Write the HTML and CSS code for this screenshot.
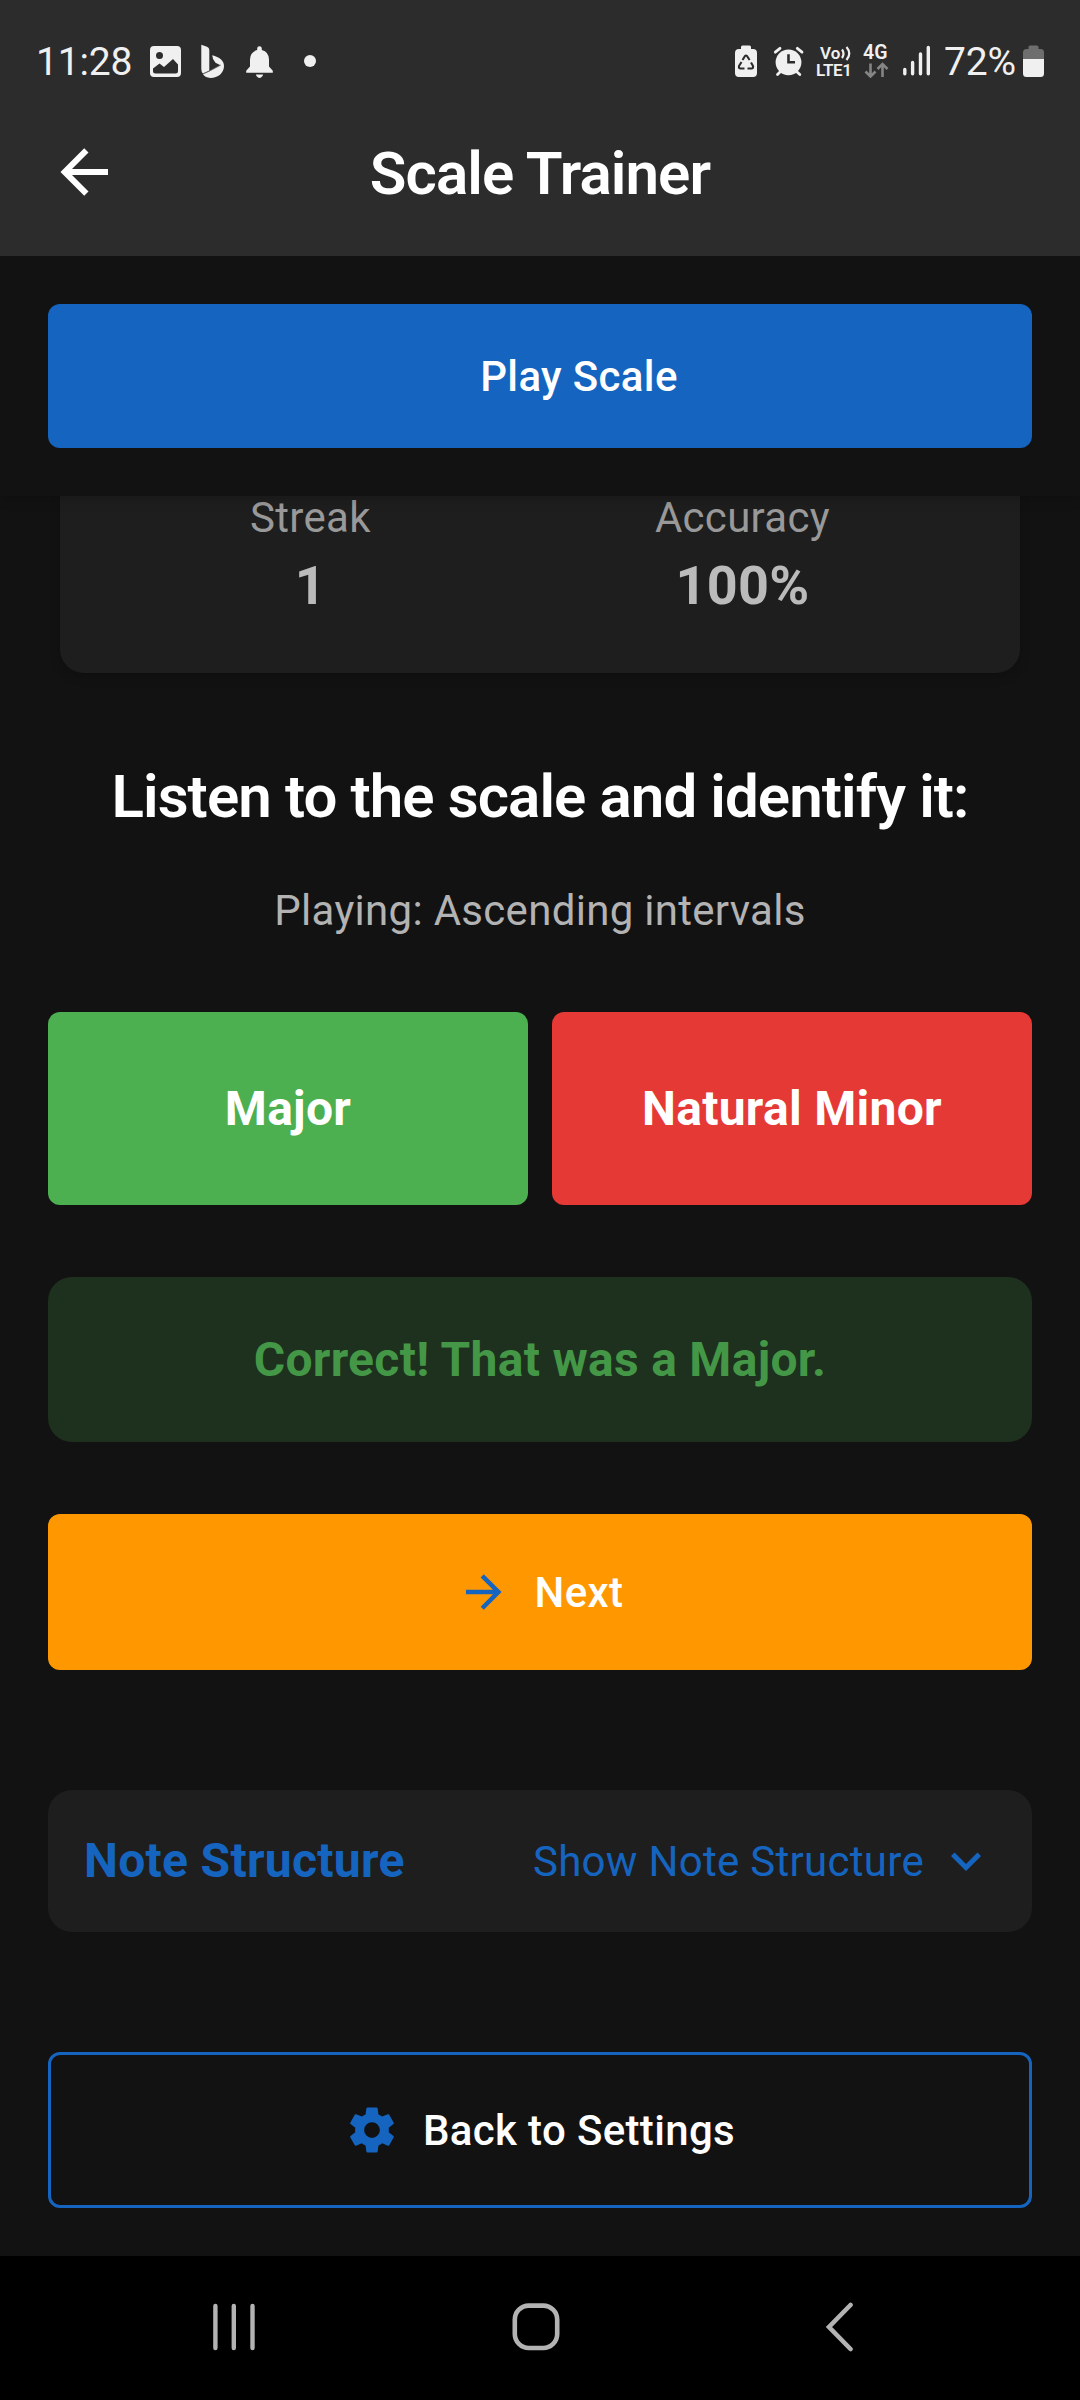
FILE: index.html
```html
<!DOCTYPE html>
<html lang="en">
<head>
<meta charset="utf-8">
<title>Scale Trainer</title>
<link rel="stylesheet" href="styles.css">
</head>
<body>
<div class="screen">
  <header class="top">
    <div class="status">
      <div class="status-side">
        <span class="clock">11:28</span>
        <svg class="i-photo" viewBox="150 44 32 34" width="32" height="34"><path fill="#f0f0f0" fill-rule="evenodd" d="M154 46h23a4 4 0 0 1 4 4v23a4 4 0 0 1-4 4h-23a4 4 0 0 1-4-4V50a4 4 0 0 1 4-4zM159.500 52.100a3.500 3.500 0 1 0 0 7a3.500 3.500 0 1 0 0-7zM153 68.500L159.500 63.500L164 67L173 59L178 64.500V71Q178 73.500 175.500 73.500H155.500Q153 73.500 153 71z"/></svg>
        <svg class="i-bing" viewBox="200 44 26 34" width="26" height="34"><path fill="#f0f0f0" d="M201.300 44.800L207 46.800Q209.300 47.800 209.300 50V70.500L203 73.500Q201.300 72 201.300 69zM212.200 55.200C219.500 57 224 60.500 224 66C224 73 218 78 210.500 78C206.500 78 204 76 203 74.300L209.600 71.300L220.500 65.300L215.500 62.700Q212.200 59 212.200 55.200z"/><path fill="none" stroke="#777" stroke-width=".7" d="M203 73.800L209.500 71L221 65"/></svg>
        <svg class="i-bell" viewBox="246 44 28 34" width="28" height="34"><path fill="#f0f0f0" d="M257.200 50V48.500a2.300 2.300 0 0 1 4.600 0V50Q269 52 269 59.500V66.500L272.800 70.800V72.800H246.200V70.800L250 66.500V59.500Q250 52 257.200 50zM255.800 74.500H263.200L262.500 76Q259.500 80 256.500 76z"/></svg>
        <span class="dot"></span>
      </div>
      <div class="status-side">
        <svg class="i-saver" viewBox="734 44 24 34" width="24" height="34"><path fill="#f0f0f0" d="M741 49v-2a1.500 1.500 0 0 1 1.500-1.500h7A1.500 1.500 0 0 1 751 47v2h2a4 4 0 0 1 4 4v20a4 4 0 0 1-4 4h-14a4 4 0 0 1-4-4V53a4 4 0 0 1 4-4z"/><g fill="none" stroke="#2c2c2c" stroke-width="2.100" stroke-linejoin="round"><path d="M742.500 60L745 56Q746 55 747 56L749.600 60"/><path d="M751 62.500L753 66Q753.500 68.500 751.500 68.500H747.500"/><path d="M744.500 68.500H740.500Q738.500 68.500 739 66L741.500 62"/></g></svg>
        <svg class="i-alarm" viewBox="773 44 31 34" width="31" height="34"><circle cx="788.500" cy="62.300" r="12.900" fill="#f0f0f0"/><path d="M775.300 52.200L780 48.300M797.300 48.300L802 52.200M777.500 74.500L781 71M796 71L799.800 74.500" fill="none" stroke="#f0f0f0" stroke-width="2.800" stroke-linecap="round"/><path d="M788.500 54.300V62.300H795" fill="none" stroke="#2c2c2c" stroke-width="2.600"/></svg>
        <div class="volte">
          <div class="volte-top">Vo<svg viewBox="841 46 12 15" width="12" height="15"><path d="M842 49.500Q845 53.800 842 58M846.500 47Q852 53.500 846.500 60" fill="none" stroke="#f0f0f0" stroke-width="2.200"/></svg></div>
          <div class="volte-bottom">LTE1</div>
        </div>
        <div class="data">
          <div class="data-type">4G</div>
          <svg viewBox="863 62 28 16" width="28" height="16"><path d="M870.500 63.500V76M865.500 71.500L870.500 76.500L875.500 71.500M882.500 77V64M877.500 69L882.500 64L887.500 69" fill="none" stroke="#858585" stroke-width="2.600"/></svg>
        </div>
        <svg class="i-signal" viewBox="902 44 29 34" width="29" height="34"><path d="M904.800 69.500V73.700M912.600 62.500V73.700M920.500 54V73.700M928.300 47.500V73.700" stroke="#f0f0f0" stroke-width="3.400" stroke-linecap="round"/></svg>
        <span class="percent">72%</span>
        <svg class="i-battery" viewBox="1023 44 21 34" width="21" height="34"><path fill="#6e6e6e" d="M1028.500 49v-2a1.500 1.500 0 0 1 1.500-1.500h7a1.500 1.500 0 0 1 1.500 1.500v2h2a3.500 3.500 0 0 1 3.500 3.500V59h-21v-6.500a3.500 3.500 0 0 1 3.500-3.500z"/><path fill="#f0f0f0" d="M1023 59h21v14.500a3.500 3.500 0 0 1-3.500 3.500h-14a3.500 3.500 0 0 1-3.500-3.500z"/></svg>
      </div>
    </div>
    <div class="appbar">
      <svg class="back" viewBox="0 0 24 24"><path fill="#fff" d="M20 11v2H8l5.500 5.500-1.420 1.420L4.160 12l7.920-7.920L13.500 5.500 8 11z"/></svg>
      <h1 class="title">Scale Trainer</h1>
    </div>
  </header>

  <div class="play-bar">
    <button class="btn play"><span class="icon"></span><span class="label">Play Scale</span></button>
  </div>

  <main class="content">
    <section class="stats">
      <div class="stat"><span class="stat-label">Streak</span><span class="stat-value">1</span></div>
      <div class="stat"><span class="stat-label">Accuracy</span><span class="stat-value">100%</span></div>
    </section>

    <h2 class="prompt">Listen to the scale and identify it:</h2>
    <p class="mode">Playing: Ascending intervals</p>

    <div class="answers">
      <button class="answer right">Major</button>
      <button class="answer wrong">Natural Minor</button>
    </div>

    <div class="feedback"><span>Correct! That was a Major.</span></div>

    <button class="btn next">
      <svg class="icon" viewBox="0 0 24 24"><path fill="#1565c0" d="M4 11v2h12l-5.500 5.500 1.420 1.420L19.840 12l-7.920-7.920L10.500 5.500 16 11z"/></svg>
      <span class="label">Next</span>
    </button>

    <section class="notes">
      <span class="notes-title">Note Structure</span>
      <span class="notes-toggle"><span class="label">Show Note Structure</span>
        <svg class="chevron" viewBox="0 0 24 24"><path fill="#1565c0" d="M7.410 8.580L12 13.170l4.590-4.590L18 10l-6 6-6-6z"/></svg>
      </span>
    </section>

    <button class="btn settings">
      <svg class="icon" viewBox="0 0 24 24"><path fill="#1565c0" d="M12 15.500A3.500 3.500 0 0 1 8.500 12 3.500 3.500 0 0 1 12 8.500a3.500 3.500 0 0 1 3.500 3.500 3.500 3.500 0 0 1-3.500 3.500m7.430-2.530c.04-.32.07-.64.07-.97 0-.33-.03-.66-.07-1l2.110-1.630c.19-.15.24-.42.12-.64l-2-3.460c-.12-.22-.39-.31-.61-.22l-2.490 1c-.52-.39-1.060-.73-1.690-.98l-.37-2.650A.506.506 0 0 0 14 2h-4c-.25 0-.46.18-.5.42l-.37 2.650c-.63.25-1.170.59-1.690.98l-2.490-1c-.22-.09-.49 0-.61.22l-2 3.460c-.13.22-.07.49.12.64L4.570 11c-.04.34-.07.67-.07 1 0 .33.03.65.07.97l-2.110 1.660c-.19.15-.25.42-.12.64l2 3.460c.12.22.39.3.61.22l2.490-1.010c.52.4 1.060.74 1.690.99l.37 2.650c.04.24.25.42.5.42h4c.25 0 .46-.18.5-.42l.37-2.650c.63-.26 1.170-.59 1.690-.99l2.490 1.010c.22.08.49 0 .61-.22l2-3.460c.12-.22.07-.49-.12-.64z"/></svg>
      <span class="label">Back to Settings</span>
    </button>
  </main>

  <nav class="navbar">
    <svg viewBox="212 2302 44 50" width="44" height="50"><path d="M215.400 2306V2348M233.800 2306V2348M252.500 2306V2348" stroke="#b3b3b3" stroke-width="4.400" stroke-linecap="round"/></svg>
    <svg class="home" viewBox="511 2302 50 50" width="50" height="50"><rect x="514.800" y="2305.600" width="42.400" height="42.400" rx="14" fill="none" stroke="#b3b3b3" stroke-width="4.600"/></svg>
    <svg viewBox="824 2302 30 50" width="30" height="50"><path d="M850.500 2305L829 2327L850.500 2349" fill="none" stroke="#b3b3b3" stroke-width="4.600" stroke-linecap="round"/></svg>
  </nav>
</div>
</body>
</html>
```
FILE: styles.css
```css
* { box-sizing: border-box; margin: 0; padding: 0; }

body {
  background: #121212;
  color: #fff;
  font-family: Roboto, "Liberation Sans", sans-serif;
  letter-spacing: 0.3px;
}

svg { display: block; flex: none; }

.screen {
  width: 1080px;
  height: 2400px;
  display: flex;
  flex-direction: column;
  overflow: hidden;
}

/* Header */
.top { height: 256px; background: #2c2c2c; flex: none; z-index: 2; }

.status {
  height: 88px;
  padding: 44px 36px 0 36px;
  display: flex;
  justify-content: space-between;
}
.status-side { display: flex; height: 34px; }
.clock, .percent {
  color: #f0f0f0;
  font-size: 39px;
  line-height: 36px;
  letter-spacing: 0;
  white-space: nowrap;
}
.clock { width: 114px; letter-spacing: -0.2px; }
.i-bing { margin-left: 18px; }
.i-bell { margin-left: 20px; }
.dot {
  width: 12px;
  height: 12px;
  margin: 11px 0 0 30px;
  border-radius: 50%;
  background: #f0f0f0;
}
.i-alarm { margin-left: 15px; }
.volte, .data { color: #f0f0f0; font-weight: 600; white-space: nowrap; }
.volte { width: 39px; margin-left: 12px; font-size: 17px; line-height: 17px; }
.volte-top { display: flex; padding-left: 4px; letter-spacing: 0; line-height: 18px; }
.volte-top svg { margin: 2px 0 0 1px; }
.volte-bottom { letter-spacing: -0.3px; }
.data { width: 28px; margin-left: 8px; }
.data-type { font-size: 19.500px; line-height: 18px; letter-spacing: 0; }
.i-signal { margin-left: 11px; }
.percent { width: 79px; margin-left: 13px; letter-spacing: -0.2px; }

.appbar {
  height: 168px;
  display: grid;
  grid-template-columns: 96px 1fr 96px;
  align-items: center;
  padding: 0 48px;
}
.back { width: 72px; height: 72px; }
.title {
  padding-top: 3px;
  text-align: center;
  font-size: 60px;
  line-height: 72px;
  font-weight: 600;
  letter-spacing: -0.9px;
}

/* Pinned play control */
.play-bar {
  height: 240px;
  flex: none;
  padding: 48px;
  background: #121212;
  box-shadow: 0 3px 12px rgba(0, 0, 0, 0.2);
  z-index: 1;
}

.btn {
  display: flex;
  align-items: center;
  justify-content: center;
  gap: 24px;
  width: 100%;
  border: 0;
  border-radius: 12px;
  color: #fff;
  font: 500 42px/60px Roboto, "Liberation Sans", sans-serif;
  letter-spacing: 0.35px;
}
.label { padding-top: 2px; }
.icon { width: 54px; height: 54px; }
.play { height: 144px; background: #1565c0; }

/* Scrolled content */
.content {
  height: 1760px;
  flex: none;
  padding: 0 48px;
  display: flex;
  flex-direction: column;
}

.stats {
  height: 177px;
  flex: none;
  margin: 0 12px;
  padding: 0 48px 48px;
  display: flex;
  justify-content: space-around;
  background: #1e1e1e;
  border-radius: 0 0 24px 24px;
  box-shadow: 0 3px 12px rgba(0, 0, 0, 0.2);
}
.stat { display: flex; flex-direction: column; align-items: center; }
.stat-label {
  padding-top: 1px;
  font-size: 42px;
  line-height: 42px;
  color: #999;
}
.stat-value {
  margin-top: 19px;
  font-size: 54px;
  line-height: 56px;
  font-weight: 700;
  color: #bbb;
}

.prompt {
  margin-top: 88px;
  text-align: center;
  font-size: 60px;
  line-height: 72px;
  font-weight: 600;
  letter-spacing: -0.9px;
}
.mode {
  margin-top: 48px;
  text-align: center;
  font-size: 42px;
  line-height: 60px;
  color: #b3b3b3;
}

.answers {
  margin-top: 71.400px;
  height: 192.300px;
  flex: none;
  display: grid;
  grid-template-columns: 1fr 1fr;
  gap: 24px;
}
.answer {
  padding-top: 1px;
  border: 0;
  border-radius: 12px;
  color: #fff;
  font: 700 48px/60px Roboto, "Liberation Sans", sans-serif;
  letter-spacing: 0.3px;
}
.right { background: #4caf50; }
.wrong { background: #e53935; }

.feedback {
  margin-top: 72px;
  height: 165px;
  flex: none;
  display: flex;
  align-items: center;
  justify-content: center;
  border-radius: 24px;
  background: #1e301e;
  color: #439746;
  font-size: 48px;
  font-weight: 700;
}

.next { margin-top: 72.400px; height: 156px; flex: none; background: #ff9800; }

.notes {
  margin-top: 120px;
  height: 141.500px;
  flex: none;
  padding: 0 36px;
  display: flex;
  align-items: center;
  justify-content: space-between;
  border-radius: 24px;
  background: #1e1e1e;
  color: #1565c0;
}
.notes-title { font-size: 48px; font-weight: 700; }
.notes-toggle { display: flex; align-items: center; gap: 12px; font-size: 42px; }
.chevron { width: 60px; height: 60px; }

.settings {
  margin-top: 120px;
  height: 156px;
  flex: none;
  border: 3px solid #1565c0;
  background: transparent;
}

/* System navigation */
.navbar {
  height: 144px;
  flex: none;
  display: flex;
  align-items: flex-start;
  padding: 46px 0 0 212px;
  background: #000;
}
.home { margin: 0 263px 0 255px; }
```
